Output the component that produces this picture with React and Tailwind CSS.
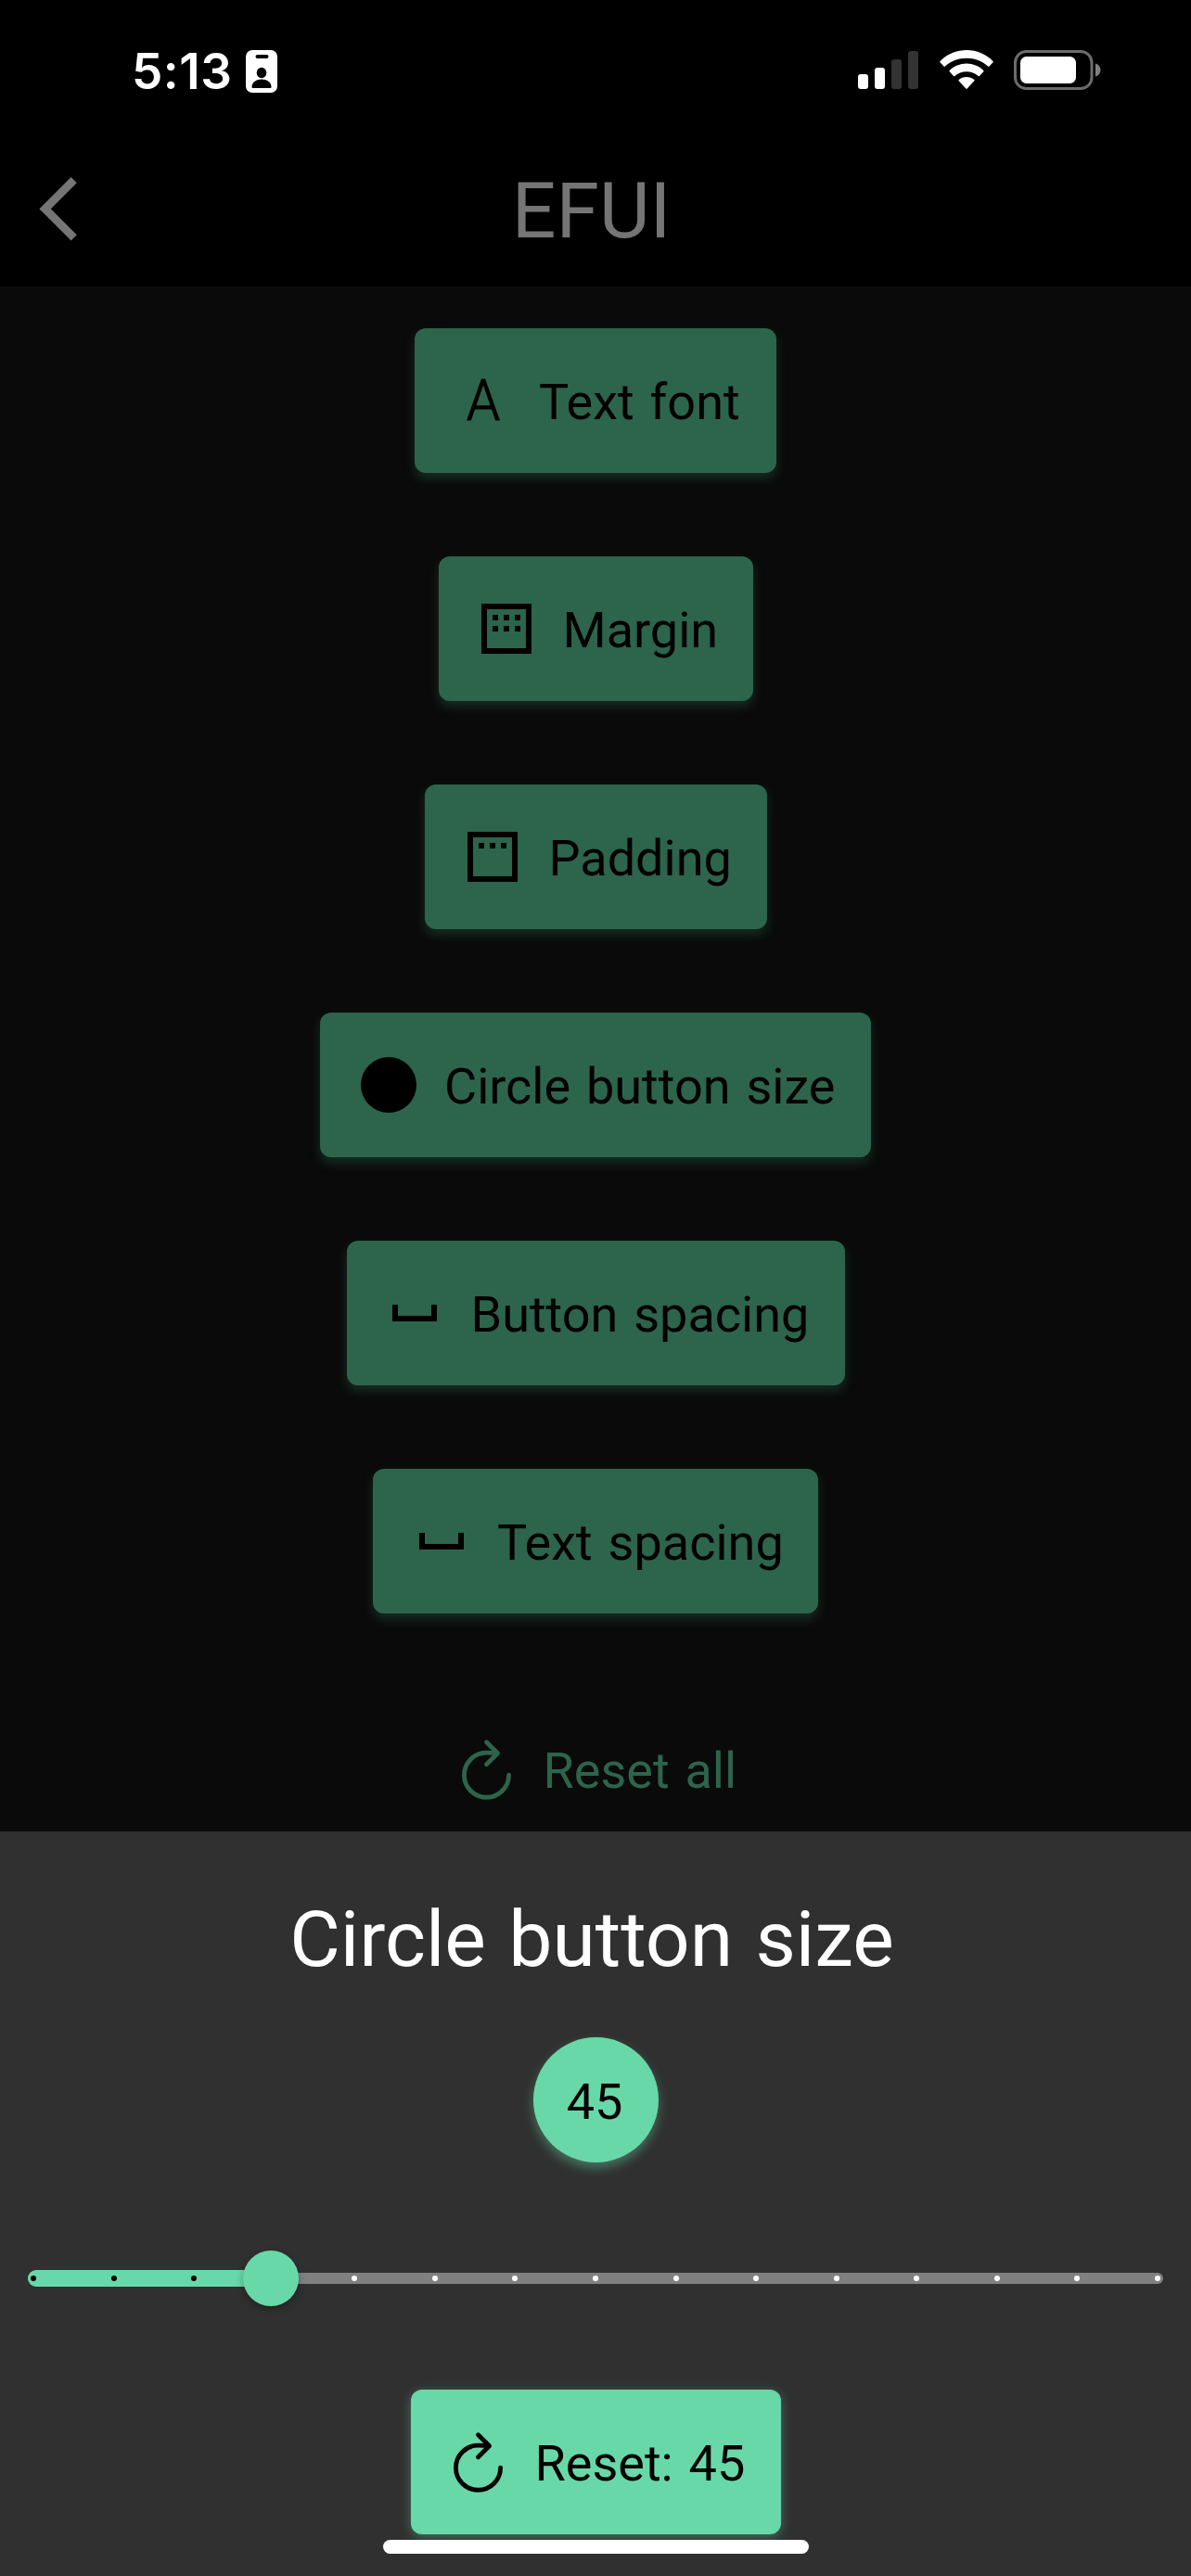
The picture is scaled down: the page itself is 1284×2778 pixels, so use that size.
import React from "react";

const RefreshIcon = () => (
  <svg viewBox="0 0 512 512" className="-mr-[2px] -ml-[3px] h-[77px] w-[77px] shrink-0" fill="none" stroke="currentColor" strokeWidth="32" strokeLinecap="round">
    <path d="M320 146s24.36-12-64-12a160 160 0 1 0 160 160" strokeMiterlimit="10" />
    <path d="M256 58l80 80-80 80" strokeLinejoin="round" />
  </svg>
);

const GlyphIcon = ({ d }) => (
  <svg viewBox="0 0 24 24" className="h-[72px] w-[72px] shrink-0" fill="currentColor" fillRule="evenodd">
    <path d={d} />
  </svg>
);

const LetterIcon = () => (
  <span className="flex h-[72px] w-[72px] shrink-0 scale-x-[0.93] items-center justify-center text-[62px] leading-none font-light [-webkit-text-stroke:1.200px_black]">A</span>
);

const FRAME = "M3 3h18v18H3zM5 5v14h14V5z";
const MARGIN = FRAME + "M7 7h2v2H7zM11 7h2v2h-2zM15 7h2v2h-2zM7 11h2v2H7zM11 11h2v2h-2zM15 11h2v2h-2z";
const PADDING = FRAME + "M7 7h2v2H7zM11 7h2v2h-2zM15 7h2v2h-2z";
const CIRCLE = "M12 2a10 10 0 1 0 0 20a10 10 0 1 0 0-20z";
const SPACE = "M4 9v6h16V9h-2v4H6V9z";

const BUTTONS = [
  { label: "Text font", icon: <LetterIcon />, width: "w-[390px]" },
  { label: "Margin", icon: <GlyphIcon d={MARGIN} />, width: "w-[339px]" },
  { label: "Padding", icon: <GlyphIcon d={PADDING} />, width: "w-[369px]" },
  { label: "Circle button size", icon: <GlyphIcon d={CIRCLE} />, width: "w-[594px]" },
  { label: "Button spacing", icon: <GlyphIcon d={SPACE} />, width: "w-[537px]" },
  { label: "Text spacing", icon: <GlyphIcon d={SPACE} />, width: "w-[480px]" },
];

function Button({ label, icon, className }) {
  return (
    <button className={"flex h-[156px] shrink-0 items-center gap-[24.5px] rounded-[12px] pl-[37.5px] text-[54px] whitespace-nowrap " + className}>
      {icon}
      <span className="pt-[3px] leading-[60px] [word-spacing:3.500px]">{label}</span>
    </button>
  );
}

function StatusBar() {
  return (
    <div className="flex h-[144px] items-start justify-between pt-[54px] pr-[97px] pl-[142px] text-white">
      <div className="flex items-start">
        <span className="-mt-[7px] w-[123px] font-[Inter] text-[53px] leading-[60px] font-semibold tracking-[0.5px]">5:13</span>
        <svg viewBox="0 0 34 46" className="h-[46px] w-[34px]">
          <rect width="34" height="46" rx="7" fill="white" />
          <rect x="10.500" y="5" width="14" height="4" rx="2" fill="black" />
          <ellipse cx="17" cy="24.500" rx="5.300" ry="5.800" fill="black" />
          <path d="M6.500 39.500c0-5 5-8 10.500-8s10.500 3 10.500 8c0 1-.5 1.500-1.500 1.500H8c-1 0-1.500-.5-1.500-1.500z" fill="black" />
        </svg>
      </div>
      <div className="flex items-start">
        <svg viewBox="0 0 65 42" className="mr-[23px] h-[42px] w-[65px]">
          <rect x="0" y="26" width="11" height="16" rx="3" fill="white" />
          <rect x="18" y="19" width="11" height="23" rx="3" fill="white" />
          <rect x="36" y="10" width="11" height="32" rx="3" fill="#333333" />
          <rect x="54" y="1" width="11" height="41" rx="3" fill="#333333" />
        </svg>
        <svg viewBox="0 0 58 42" className="mr-[22px] h-[42px] w-[58px]" fill="white">
          <path d="M29 0C18 0 7.500 4.500 0.500 12Q0 12.700 0.500 13.300L4.500 17.600Q5.200 18.200 5.900 17.600C12 12 20 8.800 29 8.800S46 12 52.100 17.600Q52.800 18.200 53.500 17.600L57.500 13.300Q58 12.700 57.500 12C50.500 4.500 40 0 29 0z" />
          <path d="M29 14.500C22 14.500 15.500 17.300 10.700 22Q10.200 22.700 10.700 23.300L15 28Q15.600 28.500 16.300 28C19.700 25 24.200 23.200 29 23.200S38.300 25 41.700 28Q42.400 28.500 43 28L47.300 23.300Q47.800 22.700 47.300 22C42.500 17.300 36 14.500 29 14.500z" />
          <path d="M29 29C25.800 29 22.900 30.100 20.700 31.900Q20.100 32.500 20.700 33.200L28.300 41.400Q29 42.200 29.700 41.400L37.300 33.200Q37.900 32.500 37.300 31.900C35.100 30.100 32.200 29 29 29z" />
        </svg>
        <svg viewBox="0 0 94 43" className="h-[43px] w-[94px]">
          <rect x="1.500" y="1.500" width="82.500" height="40" rx="12" fill="none" stroke="#6b6b6b" strokeWidth="3" />
          <rect x="7" y="7" width="60" height="29" rx="6.500" fill="white" />
          <path d="M88 14.500c3.500 1 5.500 4 5.500 7s-2 6-5.500 7z" fill="#808080" />
        </svg>
      </div>
    </div>
  );
}

function Slider({ value, steps }) {
  return (
    <div className="relative mx-[30px] mt-[95px] flex h-[60px] shrink-0 items-center">
      <div className="h-[12px] w-full rounded-full bg-[#808080]" />
      <div className="absolute left-0 h-[18px] rounded-l-full bg-[#69d8a9]" style={{ width: `${(value / steps) * 100}%` }} />
      <div className="absolute inset-x-[3px] flex justify-between">
        {Array.from({ length: steps + 1 }, (_, i) => (
          <span key={i} className={i < value ? "h-[6px] w-[6px] rounded-full bg-black" : "h-[6px] w-[6px] rounded-full bg-white"} />
        ))}
      </div>
      <div
        className="absolute h-[60px] w-[60px] -translate-x-1/2 rounded-full bg-[#69d8a9] shadow-[0_3px_9px_rgba(0,0,0,0.3)]"
        style={{ left: `${(value / steps) * 100}%` }}
      />
    </div>
  );
}

export default function App() {
  return (
    <div className="flex h-[2778px] w-[1284px] flex-col overflow-hidden bg-[#0a0a0a] font-[Roboto,sans-serif]">
      <header className="h-[309px] shrink-0 bg-black">
        <StatusBar />
        <div className="grid grid-cols-[1fr_auto_1fr] items-start text-[#757575]">
          <svg viewBox="0 0 41 69" className="mt-[47px] ml-[42px] h-[69px] w-[41px]" fill="currentColor">
            <path d="M34.600 0l6.200 6.200L12.800 34.200l28 28-6.200 6.200L0.400 34.200z" />
          </svg>
          <h1 className="mt-[34px] pr-[9px] text-[84px] leading-[100px]">EFUI</h1>
        </div>
      </header>

      <main className="flex h-[1666px] shrink-0 flex-col items-center gap-[90px] overflow-hidden pt-[45px]">
        {BUTTONS.map(({ label, icon, width }) => (
          <Button key={label} label={label} icon={icon} className={"bg-[#2d644c] text-black shadow-[0_6px_12px_rgba(45,100,76,0.4)] " + width} />
        ))}
        <Button label="Reset all" icon={<RefreshIcon />} className="w-[381px] text-[#2d644c]" />
      </main>

      <section className="relative flex grow flex-col items-center bg-[#303030]">
        <h2 className="mt-[67px] pr-[8px] text-[84px] leading-[100px] text-white [word-spacing:3.500px]">Circle button size</h2>
        <div className="mt-[55px] flex h-[135px] w-[135px] shrink-0 items-center justify-center rounded-full bg-[#69d8a9] pt-[4px] pr-[2px] text-[54px] leading-none shadow-[0_6px_12px_rgba(105,217,169,0.4)]">
          45
        </div>
        <div className="w-full">
          <Slider value={3} steps={14} />
        </div>
        <Button label="Reset: 45" icon={<RefreshIcon />} className="mt-[90px] w-[399px] bg-[#69d8a9] text-black shadow-[0_3px_12px_rgba(105,217,169,0.4)]" />
        <div className="absolute bottom-[24px] h-[15px] w-[459px] rounded-full bg-white" />
      </section>
    </div>
  );
}
